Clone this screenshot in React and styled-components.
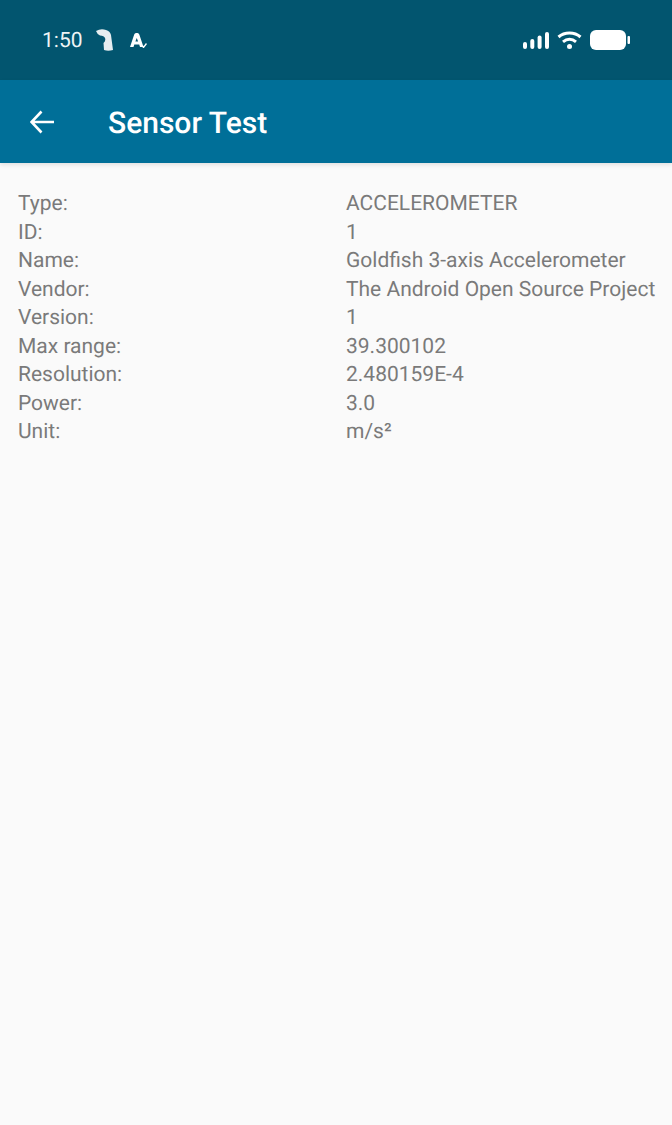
import React from 'react'
import styled, { createGlobalStyle } from 'styled-components'

const GlobalStyle = createGlobalStyle`
  html, body {
    margin: 0;
    padding: 0;
    background: #fafafa;
  }
  body {
    font-family: Roboto, "Liberation Sans", sans-serif;
    text-rendering: geometricPrecision;
  }
`

const Screen = styled.div`
  width: 672px;
  height: 1125px;
  display: flex;
  flex-direction: column;
  background: #fafafa;
  overflow: hidden;
`

const StatusBar = styled.div`
  height: 80px;
  flex: none;
  display: flex;
  align-items: center;
  justify-content: space-between;
  padding: 0 42px;
  background: #02556f;
  color: #fff;
`

const StatusLeft = styled.div`
  display: flex;
  align-items: center;
`

const StatusRight = styled.div`
  display: flex;
  align-items: center;
  gap: 8px;
`

const Clock = styled.span`
  font-size: 21px;
  color: #eef4f6;
  margin: 2px 13px 0 0;
`

const GestureSvg = styled.svg`
  margin-right: 17px;
`

const Toolbar = styled.header`
  height: 83px;
  flex: none;
  display: flex;
  align-items: center;
  padding-left: 30px;
  background: #006f98;
  box-shadow: 0 2px 4px rgba(0, 0, 0, 0.1);
`

const BackIcon = styled.svg`
  width: 26px;
  height: 26px;
  margin-right: 52px;
`

const Title = styled.h1`
  margin: 4px 0 0;
  font-size: 30px;
  font-weight: 500;
  color: #fff;
`

const Details = styled.div`
  display: grid;
  grid-template-columns: 328px 1fr;
  grid-auto-rows: 28.5px;
  padding: 27px 0 0 18px;
  font-size: 21px;
  line-height: 28.5px;
  color: #7a7a7a;
`

const rows = [
  ['Type:', 'ACCELEROMETER'],
  ['ID:', '1'],
  ['Name:', 'Goldfish 3-axis Accelerometer'],
  ['Vendor:', 'The Android Open Source Project'],
  ['Version:', '1'],
  ['Max range:', '39.300102'],
  ['Resolution:', '2.480159E-4'],
  ['Power:', '3.0'],
  ['Unit:', 'm/s²']
]

const GestureIcon = () => (
  <GestureSvg width="17" height="22" viewBox="0 0 17 22" fill="#e6edf0">
    <path d="M0 2 Q5 -1 10 1 Q14 2 15 6 L17 21 Q12 22.5 8 21 L7.5 14 Q10 12 9 9 Q8 6.5 4 6.5 Q1 5 0 2 Z" />
  </GestureSvg>
)

const AccountIcon = () => (
  <svg width="17" height="15" viewBox="0 0 17 15" fill="#fff">
    <path
      fillRule="evenodd"
      d="M0 14 L4.2 1.5 Q4.7 0 6 0 H7.5 Q8.8 0 9.3 1.5 L13.5 14 H10 L9.2 11.5 H4.3 L3.5 14 Z M5.4 8.4 H8.1 L6.75 5 Z"
    />
    <path d="M12.5 13 L13.5 14.4 L16.5 10.5" fill="none" stroke="#fff" strokeWidth="1.4" />
  </svg>
)

const SignalIcon = () => (
  <svg width="26" height="17" viewBox="0 0 26 17" fill="#fff">
    <rect x="0" y="10" width="4" height="7" rx="2" />
    <rect x="7.3" y="7" width="4" height="10" rx="2" />
    <rect x="14.6" y="3.5" width="4" height="13.5" rx="2" />
    <rect x="22" y="0" width="4" height="17" rx="2" />
  </svg>
)

const WifiIcon = () => (
  <svg width="25" height="18" viewBox="0 0 25 18" fill="none" stroke="#fff" strokeWidth="3">
    <path d="M1.5 6 C7.5 0.8 17.5 0.8 23.5 6" />
    <path d="M6 10.8 C10 7.5 15 7.5 19 10.8" />
    <circle cx="12.5" cy="15.5" r="2.5" fill="#fff" stroke="none" />
  </svg>
)

const BatteryIcon = () => (
  <svg width="40" height="20" viewBox="0 0 40 20" fill="#fff">
    <rect x="0" y="0" width="36" height="20" rx="6" />
    <rect x="37.5" y="6" width="2.5" height="8" rx="1" />
  </svg>
)

const App = () => (
  <Screen>
    <GlobalStyle />
    <StatusBar>
      <StatusLeft>
        <Clock>1:50</Clock>
        <GestureIcon />
        <AccountIcon />
      </StatusLeft>
      <StatusRight>
        <SignalIcon />
        <WifiIcon />
        <BatteryIcon />
      </StatusRight>
    </StatusBar>
    <Toolbar>
      <BackIcon viewBox="0 0 26 26" fill="none" stroke="#fff" strokeWidth="2.6">
        <path d="M24 13 H2 M11.5 2.5 L1.5 13 L11.5 23.5" />
      </BackIcon>
      <Title>Sensor Test</Title>
    </Toolbar>
    <Details>
      {rows.map(([label, value]) => (
        <React.Fragment key={label}>
          <span>{label}</span>
          <span>{value}</span>
        </React.Fragment>
      ))}
    </Details>
  </Screen>
)

export default App
